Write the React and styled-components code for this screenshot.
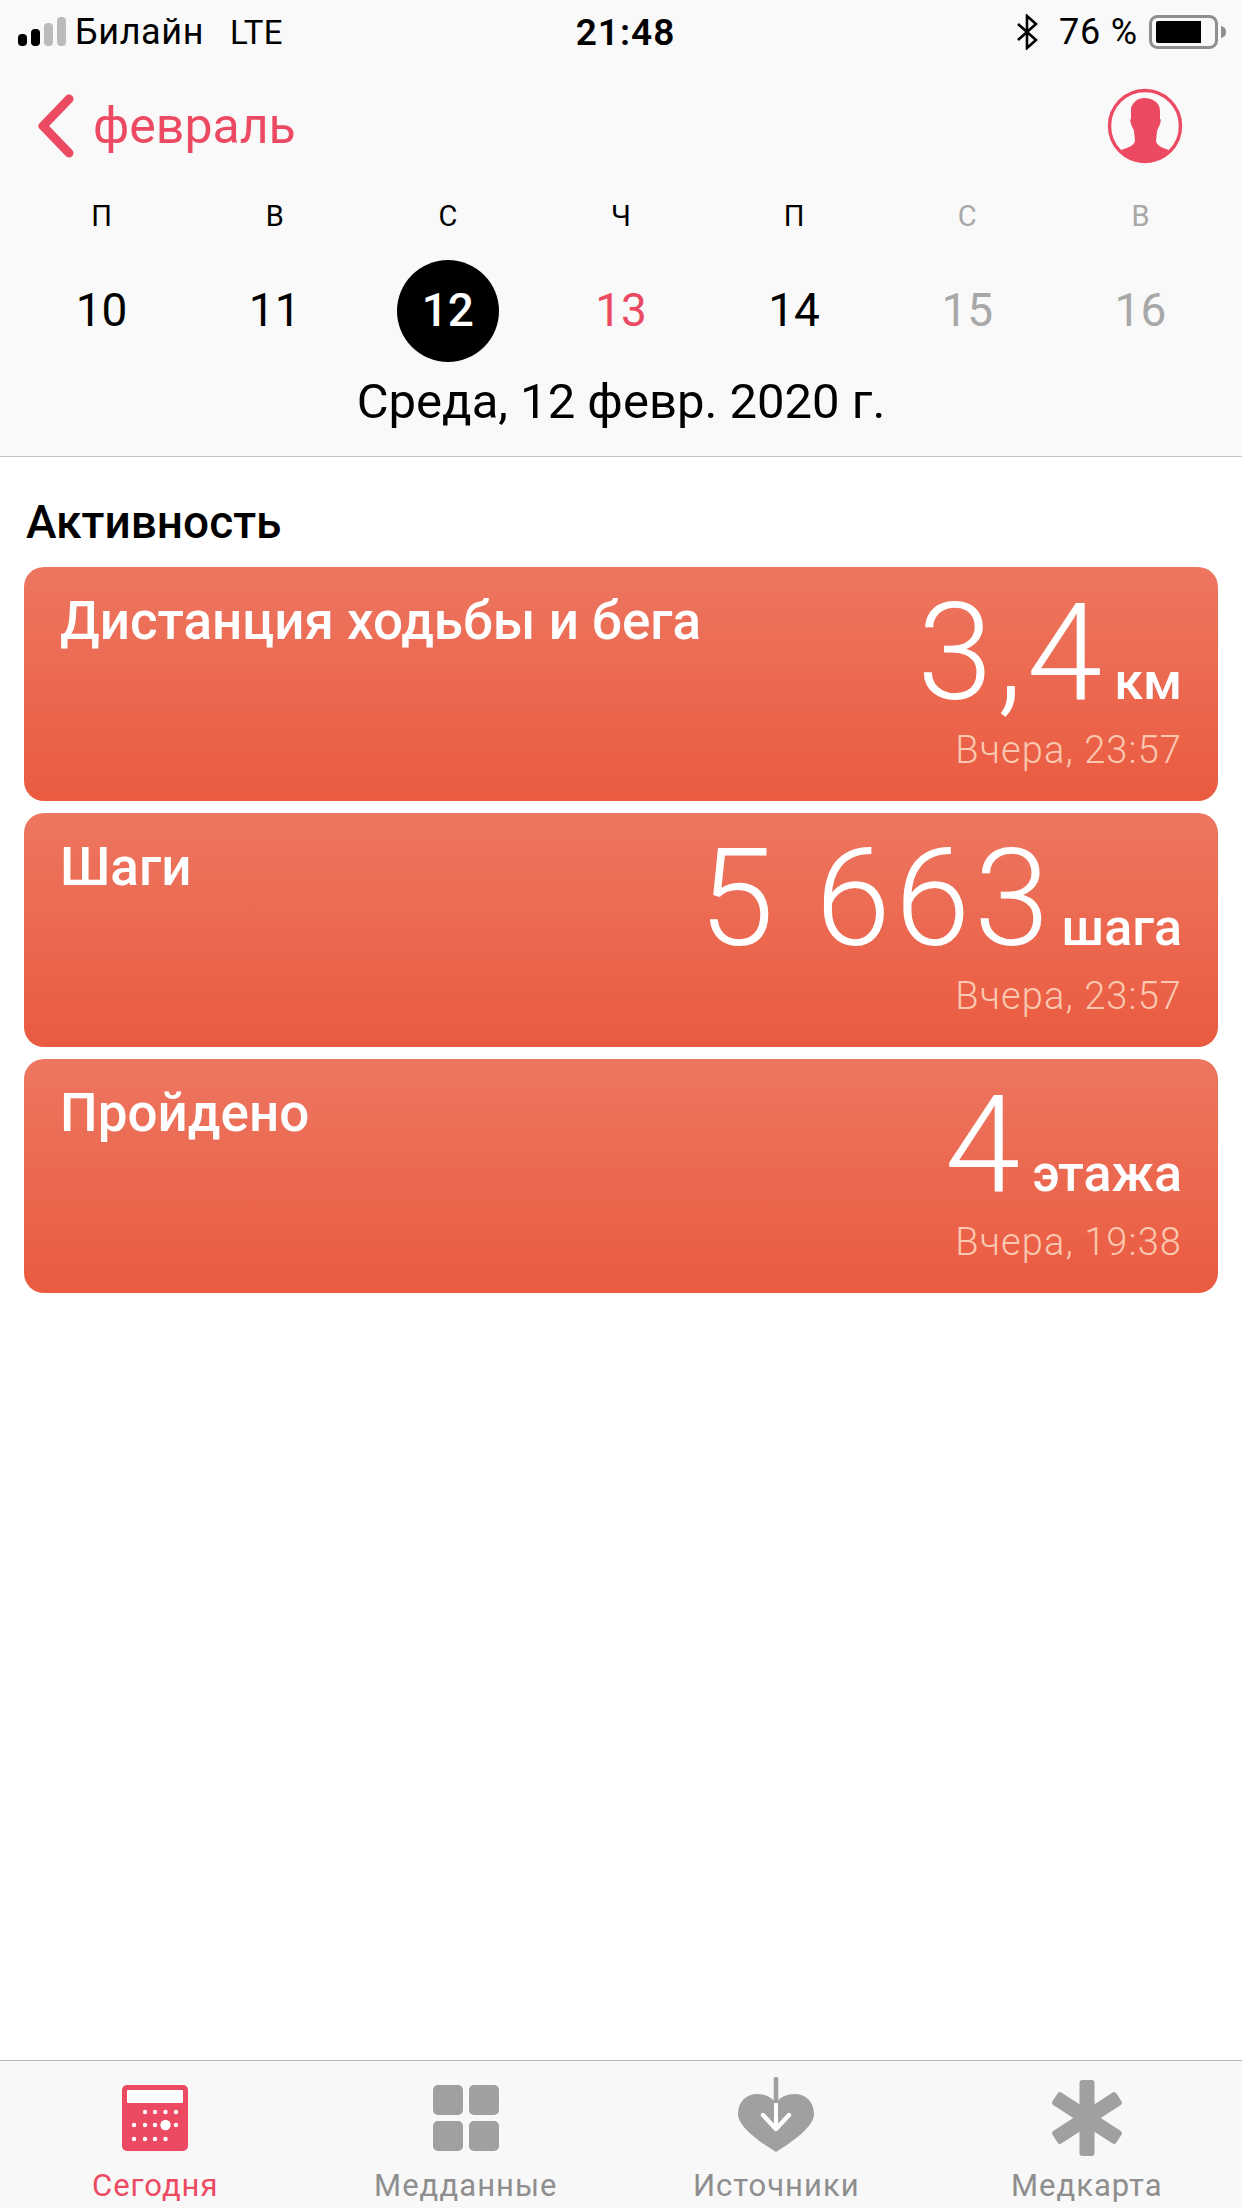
import React from 'react';
import styled, { createGlobalStyle } from 'styled-components';

const PINK = '#ec4a63';
const GRAY = '#a0a0a0';

const GlobalStyle = createGlobalStyle`
  html, body {
    margin: 0;
    padding: 0;
    background: #fff;
    font-family: Roboto, "Noto Sans", sans-serif;
  }
`;

const days = [
  { name: 'П', num: 10 },
  { name: 'В', num: 11 },
  { name: 'С', num: 12, selected: true },
  { name: 'Ч', num: 13, today: true },
  { name: 'П', num: 14 },
  { name: 'С', num: 15, weekend: true },
  { name: 'В', num: 16, weekend: true },
];

const cards = [
  { title: 'Дистанция ходьбы и бега', value: '3,4', unit: 'км', time: 'Вчера, 23:57' },
  { title: 'Шаги', value: '5 663', unit: 'шага', time: 'Вчера, 23:57' },
  { title: 'Пройдено', value: '4', unit: 'этажа', time: 'Вчера, 19:38' },
];

function SignalIcon() {
  return (
    <svg width="48" height="30" viewBox="0 0 48 30">
      <rect x="0" y="17" width="9" height="12" rx="4" fill="#000" />
      <rect x="13" y="12" width="9" height="17" rx="4" fill="#000" />
      <rect x="26" y="6" width="9" height="23" rx="4" fill="#bbb" />
      <rect x="39" y="0" width="9" height="29" rx="4" fill="#bbb" />
    </svg>
  );
}

function BluetoothIcon() {
  return (
    <svg width="21" height="36" viewBox="0 0 21 36">
      <path d="M1 10 L19 26 L10 34 L10 2 L19 10 L1 26" fill="none" stroke="#000" strokeWidth="2.6" />
    </svg>
  );
}

function BatteryIcon() {
  return (
    <svg width="78" height="34" viewBox="0 0 78 34">
      <rect x="1.5" y="1.5" width="66" height="31" rx="7" fill="none" stroke="#8e8e8e" strokeWidth="3" />
      <path d="M7 8 a2 2 0 0 1 2 -2 H52 V28 H9 a2 2 0 0 1 -2 -2 Z" fill="#000" />
      <path d="M72 11 C76 12 77 14 77 17 C77 20 76 22 72 23 Z" fill="#8e8e8e" />
    </svg>
  );
}

function BackIcon() {
  return (
    <svg width="44" height="72" viewBox="0 0 44 72">
      <path d="M35 9 L9 36 L35 63" fill="none" stroke={PINK} strokeWidth="9" strokeLinecap="round" strokeLinejoin="round" />
    </svg>
  );
}

function ProfileIcon() {
  return (
    <svg width="76" height="76" viewBox="0 0 76 76">
      <circle cx="38" cy="38" r="35.5" fill="#fafafa" stroke={PINK} strokeWidth="3.4" />
      <path
        fill={PINK}
        d="M37 10 C45 10 53 14 53 23 L53 31 C54 31 54 33 53 36 C52 39 51 40 50 43 L49 53 C50 58 56 60 62 62 C55 71 47 75 38 75 C28 75 20 71 14 62 C20 60 27 58 28 53 L27 43 C26 40 25 39 24 36 C23 33 23 31 24 31 L24 20 C26 14 31 10 37 10 Z"
      />
    </svg>
  );
}

function TodayIcon() {
  const rows = [
    { y: 35, xs: [30, 40, 50.5, 61] },
    { y: 48, xs: [19, 30, 40, 61] },
    { y: 62, xs: [19, 30, 40, 50.5] },
  ];
  return (
    <svg width="80" height="80" viewBox="0 0 80 80">
      <rect x="7" y="8" width="66" height="66" rx="5" fill={PINK} />
      <rect x="12" y="13" width="56" height="13" rx="1" fill="#fff" />
      {rows.map((row) =>
        row.xs.map((x) => <circle key={`${row.y}-${x}`} cx={x} cy={row.y} r="2.2" fill="#fff" />)
      )}
      <circle cx="50.5" cy="48" r="5.2" fill="#fff" />
    </svg>
  );
}

function DataIcon() {
  return (
    <svg width="80" height="80" viewBox="0 0 80 80">
      <rect x="7" y="8" width="30" height="30" rx="5" fill={GRAY} />
      <rect x="43" y="8" width="30" height="30" rx="5" fill={GRAY} />
      <rect x="7" y="44" width="30" height="30" rx="5" fill={GRAY} />
      <rect x="43" y="44" width="30" height="30" rx="5" fill={GRAY} />
    </svg>
  );
}

function SourcesIcon() {
  return (
    <svg width="80" height="80" viewBox="0 0 80 80">
      <path
        fill={GRAY}
        d="M40 75 C24 65 2 50 2 37 C2 25 10 17 21 17 C29 17 36 20 40 26 C44 20 51 17 59 17 C70 17 78 25 78 37 C78 50 56 65 40 75 Z"
      />
      <path d="M40 26 V52" stroke="#fff" strokeWidth="4" fill="none" />
      <path d="M27 38 L40 52 L53 38" stroke="#fff" strokeWidth="4.4" strokeLinecap="round" strokeLinejoin="round" fill="none" />
      <path d="M40 2 V24" stroke={GRAY} strokeWidth="4.6" strokeLinecap="round" fill="none" />
    </svg>
  );
}

function RecordIcon() {
  return (
    <svg width="80" height="80" viewBox="0 0 80 80">
      <rect x="32.5" y="3" width="15" height="76" rx="3" fill={GRAY} />
      <rect x="32.5" y="3" width="15" height="76" rx="3" fill={GRAY} transform="rotate(57 40 41)" />
      <rect x="32.5" y="3" width="15" height="76" rx="3" fill={GRAY} transform="rotate(-57 40 41)" />
    </svg>
  );
}

const tabs = [
  { label: 'Сегодня', Icon: TodayIcon, active: true },
  { label: 'Медданные', Icon: DataIcon },
  { label: 'Источники', Icon: SourcesIcon },
  { label: 'Медкарта', Icon: RecordIcon },
];

export default function App() {
  return (
    <Page>
      <GlobalStyle />
      <Header>
        <StatusBar>
          <StatusLeft>
            <SignalIcon />
            <Carrier>Билайн</Carrier>
            <Network>LTE</Network>
          </StatusLeft>
          <Clock>21:48</Clock>
          <StatusRight>
            <BluetoothIcon />
            <Percent>76 %</Percent>
            <BatteryIcon />
          </StatusRight>
        </StatusBar>

        <NavBar>
          <BackLink>
            <BackIcon />
            <BackText>февраль</BackText>
          </BackLink>
          <ProfileIcon />
        </NavBar>

        <WeekGrid>
          {days.map((d) => (
            <WeekName key={d.num} $weekend={d.weekend}>{d.name}</WeekName>
          ))}
        </WeekGrid>
        <DayGrid>
          {days.map((d) => (
            <DayCell key={d.num}>
              <DayNumber $selected={d.selected} $today={d.today} $weekend={d.weekend}>{d.num}</DayNumber>
            </DayCell>
          ))}
        </DayGrid>
        <DateLine>Среда, 12 февр. 2020 г.</DateLine>
      </Header>

      <Content>
        <SectionTitle>Активность</SectionTitle>
        <CardList>
          {cards.map((c) => (
            <Card key={c.title}>
              <CardTitle>{c.title}</CardTitle>
              <CardRight>
                <ValueRow>
                  <Value>{c.value}</Value>
                  <Unit>{c.unit}</Unit>
                </ValueRow>
                <CardTime>{c.time}</CardTime>
              </CardRight>
            </Card>
          ))}
        </CardList>
      </Content>

      <TabBar>
        {tabs.map(({ label, Icon, active }) => (
          <Tab key={label}>
            <Icon />
            <TabLabel $active={active}>{label}</TabLabel>
          </Tab>
        ))}
      </TabBar>
    </Page>
  );
}

const Page = styled.div`
  display: flex;
  flex-direction: column;
  width: 1242px;
  height: 2208px;
  overflow: hidden;
  background: #fff;
`;

const Header = styled.header`
  background: #f9f9f9;
  border-bottom: 1px solid #c4c4c4;
  height: 457px;
  box-sizing: border-box;
`;

const StatusBar = styled.div`
  display: grid;
  grid-template-columns: 1fr auto 1fr;
  align-items: center;
  box-sizing: border-box;
  height: 62px;
  padding: 2px 15px 0 18px;
  color: #000;
`;

const StatusLeft = styled.div`
  display: flex;
  align-items: center;
  gap: 9px;
`;

const StatusRight = styled.div`
  display: flex;
  align-items: center;
  justify-content: flex-end;
  gap: 11px;
`;

const Carrier = styled.span`
  font-size: 36px;
  letter-spacing: 0.6px;
`;

const Network = styled.span`
  margin-left: 17px;
  font-size: 33px;
  letter-spacing: 0.3px;
`;

const Percent = styled.span`
  margin-left: 10px;
  font-size: 36px;
  letter-spacing: 0.8px;
`;

const Clock = styled.span`
  margin-left: 6px;
  font-size: 37px;
  font-weight: 600;
  letter-spacing: 1px;
`;

const NavBar = styled.div`
  display: flex;
  align-items: center;
  justify-content: space-between;
  height: 128px;
  padding: 0 59px 0 34px;
`;

const BackLink = styled.div`
  display: flex;
  align-items: center;
  gap: 15px;
`;

const BackText = styled.span`
  font-size: 50px;
  color: ${PINK};
`;

const WeekGrid = styled.div`
  display: grid;
  grid-template-columns: repeat(7, 1fr);
  height: 52px;
  align-items: center;
  padding: 0 15px;
`;

const WeekName = styled.span`
  text-align: center;
  font-size: 29px;
  color: ${(p) => (p.$weekend ? '#a8a8a8' : '#000')};
`;

const DayGrid = styled.div`
  display: grid;
  grid-template-columns: repeat(7, 1fr);
  margin-top: 18px;
  padding: 0 15px;
`;

const DayCell = styled.div`
  display: flex;
  justify-content: center;
`;

const DayNumber = styled.span`
  display: flex;
  align-items: center;
  justify-content: center;
  box-sizing: border-box;
  width: 102px;
  height: 102px;
  padding-bottom: 2px;
  border-radius: 50%;
  font-size: 46px;
  font-weight: ${(p) => (p.$selected ? 500 : 400)};
  background: ${(p) => (p.$selected ? '#000' : 'transparent')};
  color: ${(p) => {
    if (p.$selected) return '#fff';
    if (p.$today) return PINK;
    if (p.$weekend) return '#a8a8a8';
    return '#000';
  }};
`;

const DateLine = styled.div`
  margin-top: 10px;
  height: 60px;
  line-height: 60px;
  text-align: center;
  font-size: 49px;
  color: #000;
`;

const Content = styled.main`
  flex: 1;
  padding: 37px 24px 0;
`;

const SectionTitle = styled.h2`
  margin: 0 0 17px 2px;
  height: 56px;
  line-height: 56px;
  font-size: 46px;
  font-weight: 500;
  color: #000;
`;

const CardList = styled.div`
  display: flex;
  flex-direction: column;
  gap: 12px;
`;

const Card = styled.div`
  display: flex;
  justify-content: space-between;
  box-sizing: border-box;
  height: 234px;
  padding: 24px 36px 0;
  border-radius: 20px;
  background: linear-gradient(to bottom, #ed7660, #ea5b40);
  color: #fff;
`;

const CardTitle = styled.div`
  margin-top: 2px;
  font-size: 53px;
  line-height: 56px;
  font-weight: 500;
`;

const CardRight = styled.div`
  display: flex;
  flex-direction: column;
  align-items: flex-end;
  padding-top: 6px;
`;

const ValueRow = styled.div`
  display: flex;
  align-items: baseline;
  gap: 8px;
  height: 112px;
`;

const Value = styled.span`
  font-size: 136px;
  line-height: 112px;
  font-weight: 300;
  letter-spacing: 4px;
`;

const Unit = styled.span`
  font-size: 52px;
  font-weight: 500;
`;

const CardTime = styled.div`
  margin-top: 21px;
  font-size: 38px;
  line-height: 40px;
  font-weight: 300;
  letter-spacing: 1.1px;
  color: #fbc8b0;
`;

const TabBar = styled.nav`
  display: grid;
  grid-template-columns: repeat(4, 1fr);
  box-sizing: border-box;
  height: 148px;
  padding-top: 16px;
  background: #f8f8f8;
  border-top: 1px solid #b4b4b4;
`;

const Tab = styled.div`
  display: flex;
  flex-direction: column;
  align-items: center;
`;

const TabLabel = styled.span`
  margin-top: 11px;
  font-size: 31px;
  line-height: 36px;
  letter-spacing: 1px;
  color: ${(p) => (p.$active ? PINK : '#8e8e8e')};
`;
